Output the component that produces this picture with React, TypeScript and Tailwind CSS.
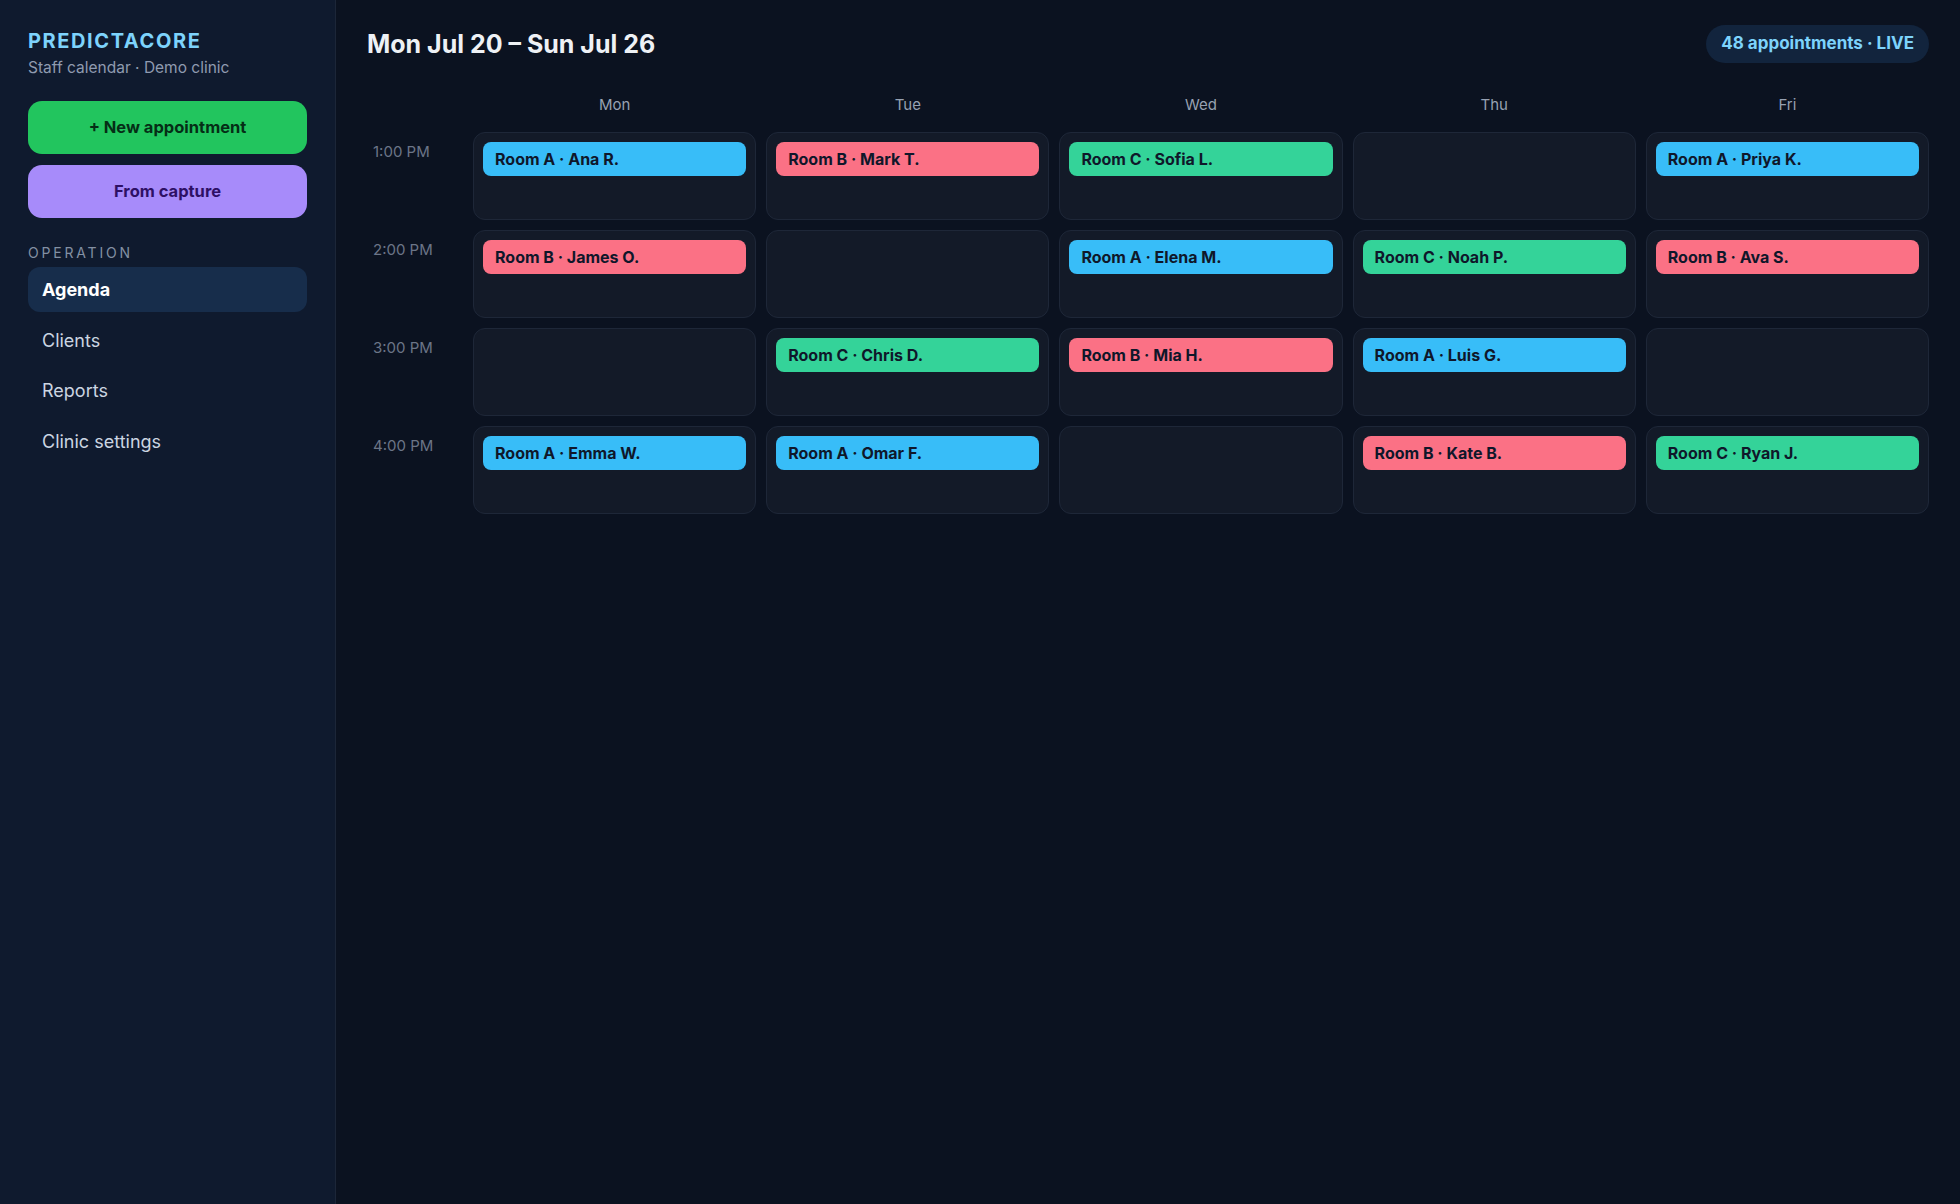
import React from "react";

type Tone = "blue" | "red" | "green";

type Slot = { room: string; name: string; tone: Tone } | null;

const toneClass: Record<Tone, string> = {
  blue: "bg-[#38bdf8]",
  red: "bg-[#fb7185]",
  green: "bg-[#34d399]",
};

const days = ["Mon", "Tue", "Wed", "Thu", "Fri"];

const hours: { label: string; slots: Slot[] }[] = [
  {
    label: "1:00 PM",
    slots: [
      { room: "Room A", name: "Ana R.", tone: "blue" },
      { room: "Room B", name: "Mark T.", tone: "red" },
      { room: "Room C", name: "Sofia L.", tone: "green" },
      null,
      { room: "Room A", name: "Priya K.", tone: "blue" },
    ],
  },
  {
    label: "2:00 PM",
    slots: [
      { room: "Room B", name: "James O.", tone: "red" },
      null,
      { room: "Room A", name: "Elena M.", tone: "blue" },
      { room: "Room C", name: "Noah P.", tone: "green" },
      { room: "Room B", name: "Ava S.", tone: "red" },
    ],
  },
  {
    label: "3:00 PM",
    slots: [
      null,
      { room: "Room C", name: "Chris D.", tone: "green" },
      { room: "Room B", name: "Mia H.", tone: "red" },
      { room: "Room A", name: "Luis G.", tone: "blue" },
      null,
    ],
  },
  {
    label: "4:00 PM",
    slots: [
      { room: "Room A", name: "Emma W.", tone: "blue" },
      { room: "Room A", name: "Omar F.", tone: "blue" },
      null,
      { room: "Room B", name: "Kate B.", tone: "red" },
      { room: "Room C", name: "Ryan J.", tone: "green" },
    ],
  },
];

const nav = ["Agenda", "Clients", "Reports", "Clinic settings"];

function Sidebar() {
  return (
    <aside className="w-[336px] shrink-0 bg-[#0f1a2e] border-r border-[#1c2638] px-[28px] pt-[29px] flex flex-col">
      <div className="text-[20px] leading-[24px] font-bold tracking-[0.08em] text-[#7dd3fc]">
        PREDICTACORE
      </div>
      <div className="mt-[5px] text-[15.5px] leading-[20px] text-[#8f9bb0]">
        Staff calendar · Demo clinic
      </div>
      <button className="mt-[23px] h-[53px] w-full rounded-[14px] bg-[#22c55e] text-[16.5px] font-bold text-[#052e16]">
        + New appointment
      </button>
      <button className="mt-[11px] h-[53px] w-full rounded-[14px] bg-[#a78bfa] text-[16.5px] font-bold text-[#2e1065]">
        From capture
      </button>
      <div className="mt-[25px] text-[14px] leading-[20px] tracking-[0.2em] text-[#8390a3]">
        OPERATION
      </div>
      <nav className="mt-[4px] flex flex-col gap-[5.5px]">
        {nav.map((item, i) => (
          <div
            key={item}
            className={
              i === 0
                ? "h-[45px] flex items-center px-[14px] rounded-[12px] bg-[#172d4b] text-[18px] font-bold text-white"
                : "h-[45px] flex items-center px-[14px] rounded-[12px] text-[18px] text-[#cbd5e1]"
            }
          >
            {item}
          </div>
        ))}
      </nav>
    </aside>
  );
}

function Cell({ slot }: { slot: Slot }) {
  return (
    <div className="h-[88px] rounded-[12px] border border-[#1e2738] bg-[#131a28] p-[9px]">
      {slot && (
        <div
          className={`h-[34px] rounded-[8px] flex items-center pl-[12px] text-[16px] font-bold text-[#0f172a] ${toneClass[slot.tone]}`}
        >
          {slot.room} · {slot.name}
        </div>
      )}
    </div>
  );
}

export default function App() {
  return (
    <div
      className="flex h-screen w-full bg-[#0b1220] overflow-hidden"
      style={{ fontFamily: "Inter, 'Noto Sans', 'Liberation Sans', sans-serif" }}
    >
      <Sidebar />
      <main className="flex-1 px-[31px] pt-[25px]">
        <header className="h-[38px] flex items-center justify-between">
          <h1 className="text-[25px] leading-[32px] font-bold text-[#eef1f5]">
            Mon Jul 20 – Sun Jul 26
          </h1>
          <div className="h-[38px] rounded-full bg-[#12243d] px-[15px] flex items-center text-[17px] font-bold text-[#7dd3fc]">
            48 appointments · LIVE
          </div>
        </header>

        <div className="mt-[32px] grid grid-cols-[96px_repeat(5,minmax(0,1fr))] gap-x-[10px]">
          <div />
          {days.map((d) => (
            <div key={d} className="text-center text-[15px] leading-[20px] text-[#97a1b2]">
              {d}
            </div>
          ))}
        </div>

        <div className="mt-[17px] grid grid-cols-[96px_repeat(5,minmax(0,1fr))] gap-[10px]">
          {hours.map((h) => (
            <React.Fragment key={h.label}>
              <div className="pl-[6px] pt-[10px] text-[15px] leading-[20px] text-[#6b7587]">
                {h.label}
              </div>
              {h.slots.map((s, i) => (
                <Cell key={i} slot={s} />
              ))}
            </React.Fragment>
          ))}
        </div>
      </main>
    </div>
  );
}
